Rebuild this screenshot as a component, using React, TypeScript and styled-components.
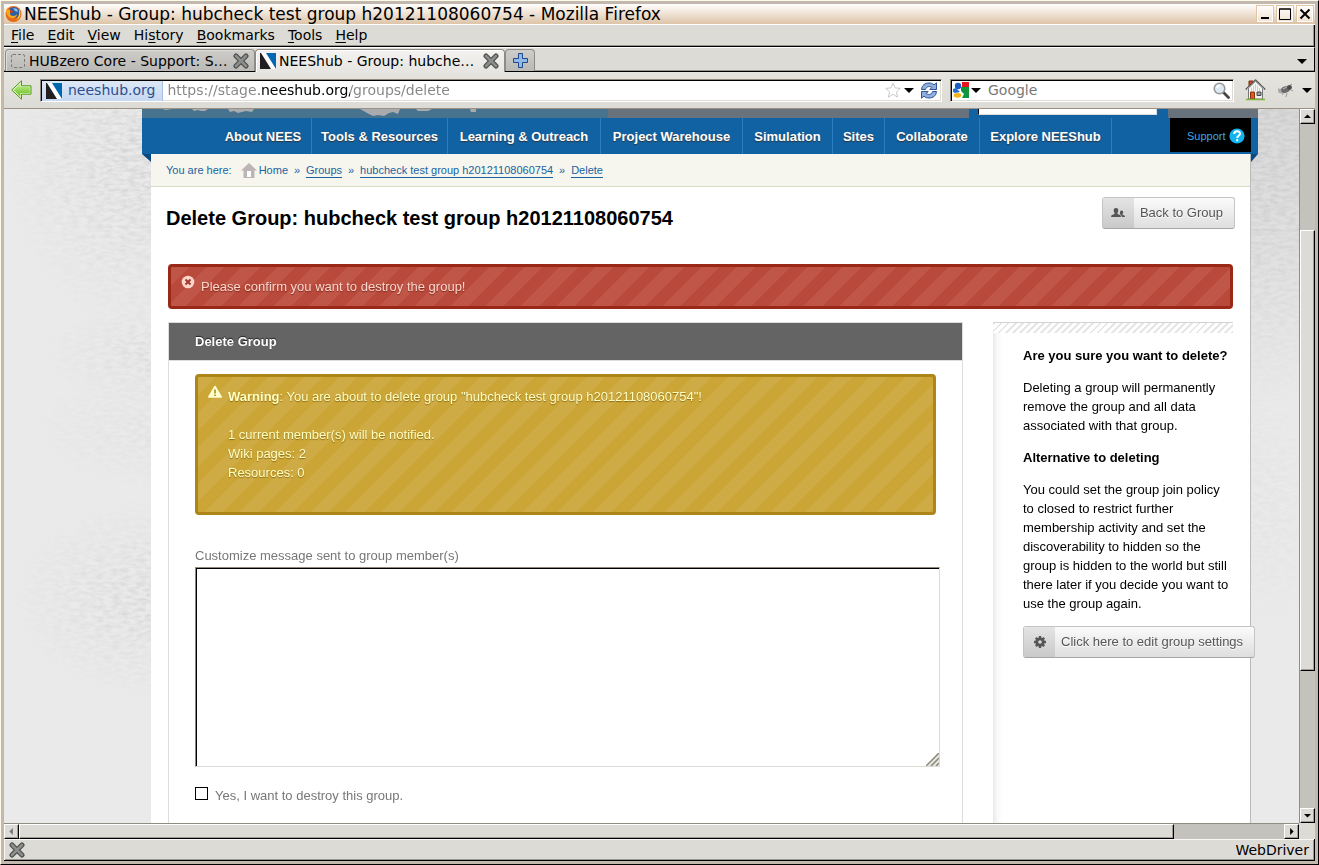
import React from "react";
import styled, { createGlobalStyle, css } from "styled-components";

const GlobalStyle = createGlobalStyle`
  *, *::before, *::after { box-sizing: border-box; }
  html, body, #root { height: 100%; margin: 0; }
  body { overflow: hidden; font: 13px/19px "Liberation Sans", Arial, sans-serif; }
  ul, ol, p, h1, h2, h3 { margin: 0; padding: 0; list-style: none; }
  svg { display: block; flex: none; }
  button { font: inherit; padding: 0; border: 0; background: none; color: inherit; }
  a { color: inherit; text-decoration: none; }
`;

const chromeFont = `"DejaVu Sans", Verdana, sans-serif`;
const face = "#dcdbd6";

/* ---------- window frame ---------- */

const Frame = styled.div`
  height: 100vh;
  display: flex;
  flex-direction: column;
  padding: 3px;
  background: #c3b8ae;
  border: 1px solid;
  border-color: #fffbea #000 #000 #fffbea;
  font-family: ${chromeFont};
  font-size: 14px;
  color: #000;
`;

const TitleBar = styled.header`
  flex: none;
  display: flex;
  align-items: center;
  height: 21px;
  padding: 0 1px;
  background: linear-gradient(#fffefd, #ddc4a8);
  border-bottom: 1px solid #fff;
`;

const WindowTitle = styled.div`
  flex: 1;
  margin-left: 2px;
  font-size: 17px;
  line-height: 20px;
  white-space: nowrap;
`;

const WindowButton = styled.button`
  width: 18px;
  height: 18px;
  margin-left: 2px;
  display: grid;
  place-items: center;
  background: linear-gradient(#fffdfb, #f0e0d0);
  border: 1px solid #dfc4a6;
  box-shadow: inset 0 0 0 1px #fff;
`;

const MenuBar = styled.nav`
  flex: none;
  display: flex;
  gap: 13px;
  height: 22px;
  padding-left: 7px;
  line-height: 21px;
  background: ${face};
  border-right: 1px solid #000;
  border-bottom: 1px solid #000;
  box-shadow: inset -1px -1px #9b968e;
`;

const MenuItem = styled.button`
  u { text-underline-offset: 2px; }
`;

const TabBar = styled.div`
  flex: none;
  display: flex;
  height: 25px;
  padding: 1px 0 0 1px;
  background: ${face};
  border-top: 1px solid #fff;
  border-right: 1px solid #000;
  box-shadow: inset 0 -1px #000, inset 0 -2px #9b968e;
`;

const Tab = styled.div<{ $active?: boolean }>`
  width: 250px;
  height: ${(p) => (p.$active ? 24 : 22)}px;
  display: flex;
  align-items: center;
  padding: ${(p) => (p.$active ? "0 5px 2px 4px" : "0 5px")};
  border: 1px solid #8e8b86;
  border-bottom: 0;
  border-radius: 4px 4px 0 0;
  background: ${(p) => (p.$active ? "linear-gradient(#f4f3f1, #e5e4e0)" : "linear-gradient(#cfcdca, #bbb9b5)")};
  box-shadow: inset 1px 1px ${(p) => (p.$active ? "#fff" : "#dedcd9")};
`;

const TabLabel = styled.span`
  flex: 1;
  margin-left: 3px;
  line-height: 20px;
  white-space: nowrap;
`;

const NewTab = styled.button`
  width: 30px;
  height: 22px;
  display: grid;
  place-items: center;
  border: 1px solid #8e8b86;
  border-bottom: 0;
  border-radius: 4px 4px 0 0;
  background: linear-gradient(#cfcdca, #bbb9b5);
`;

const ListTabs = styled.button`
  margin: 0 7px 0 auto;
`;

const ToolBar = styled.div`
  flex: none;
  display: flex;
  align-items: center;
  height: 37px;
  padding: 0 3px 0 7px;
  background: linear-gradient(#e5e4df, ${face});
  border-bottom: 1px solid #9b9187;
`;

const Field = styled.div<{ $grow?: boolean }>`
  ${(p) => (p.$grow ? css`flex: 1; margin: 0 8px;` : css`flex: 0 0 284px;`)}
  height: 23px;
  display: flex;
  align-items: center;
  padding-right: 3px;
  background: #fff;
  border: 1px solid;
  border-color: #8f887e #fff #fff #8f887e;
  box-shadow: inset 1px 1px #000, inset -1px -1px #dedbd5;
`;

const SiteBadge = styled.button`
  align-self: stretch;
  display: flex;
  align-items: center;
  gap: 6px;
  margin: 1px 0 0 1px;
  padding: 0 7px 0 4px;
  color: #2d4f8e;
  background: linear-gradient(#dde7f6, #c6d8f2);
  border-right: 1px solid #a9bfe4;
`;

const TextField = styled.input`
  flex: 1;
  min-width: 0;
  height: 20px;
  padding: 0 0 0 4px;
  border: 0;
  outline: 0;
  background: none;
  font: 14px/20px ${chromeFont};
  &::placeholder { color: #777; opacity: 1; }
`;

const Address = styled(TextField)`
  color: transparent;
  background: linear-gradient(90deg, #858585 96px, #000 96px 187px, #858585 187px);
  background-clip: text;
  -webkit-background-clip: text;
`;

const ToolButton = styled.button<{ $gap?: number }>`
  margin-left: ${(p) => p.$gap ?? 0}px;
`;

/* ---------- scroll area ---------- */

const Middle = styled.div`
  flex: 1;
  min-height: 0;
  display: flex;
`;

const Viewport = styled.div`
  position: relative;
  flex: 1;
  min-width: 0;
  overflow: hidden;
  padding: 0 41px 0 138px;
  background: #eaeaea;
  font: 13px/19px "Liberation Sans", Arial, sans-serif;
`;

const VScroll = styled.div`
  width: 16px;
  display: flex;
  flex-direction: column;
  background: #c4c2bc;
  border-left: 1px solid #8f8b85;
`;

const HScroll = styled.div`
  flex: none;
  display: flex;
  height: 16px;
  margin-right: 16px;
  background: #c4c2bc;
  border-top: 1px solid #8f8b85;
  box-shadow: 16px 0 ${face};
`;

const Bevel = css`
  background: ${face};
  border: 1px solid;
  border-color: #fff #000 #000 #fff;
  box-shadow: inset -1px -1px #a39c93;
`;

const ScrollButton = styled.button`
  ${Bevel}
  flex: none;
  width: 15px;
  height: 15px;
  display: grid;
  place-items: center;
`;

const Gutter = styled.div<{ $size: number }>`
  flex: ${(p) => p.$size} 0 0;
`;

const Thumb = styled(Gutter)`
  ${Bevel}
`;

const Status = styled.footer`
  flex: none;
  display: flex;
  align-items: center;
  justify-content: space-between;
  height: 22px;
  padding: 0 5px;
  line-height: 18px;
  background: ${face};
  border-right: 1px solid #000;
  border-bottom: 1px solid #000;
  box-shadow: inset 1px 1px #f8f7f5, inset -1px -1px #9b968e;
`;

/* ---------- site ---------- */

const Backdrop = styled.svg`
  position: absolute;
  inset: 0;
  width: 100%;
  height: 100%;
`;

const Site = styled.div`
  position: relative;
  height: 100%;
  display: flex;
  flex-direction: column;
`;

const Banner = styled.div`
  flex: none;
  display: grid;
  grid-template-columns: 466fr 361fr 199fr 90fr;
  height: 9px;
  background: #68727c;
`;

const BannerPhoto = styled.div`
  overflow: hidden;
  background: #47738f;
`;

const BannerSearch = styled.div`
  padding: 0 11px 0 9px;
  background: #1062a3;
`;

const SearchEdge = styled.input`
  display: block;
  width: 100%;
  height: 6px;
  padding: 0;
  background: #fff;
  border: 1px solid #ddd;
  border-width: 0 1px 1px 1px;
  border-left-color: #000;
`;

const NavBar = styled.nav`
  flex: none;
  display: flex;
  justify-content: space-between;
  height: 36px;
  padding: 0 7px 0 73px;
  background: #1062a3;
`;

const NavList = styled.ul`
  flex: 0 1 897px;
  display: grid;
  grid-template-columns: 97fr 136fr 153fr 142fr 90fr 52fr 95fr 132fr;
`;

const NavItem = styled.li`
  text-align: center;
  white-space: nowrap;
  border-right: 1px solid #2a7dc0;
`;

const NavLink = styled.a`
  display: block;
  font-weight: bold;
  line-height: 38px;
  color: #fff;
  text-shadow: 0 1px 1px #333;
`;

const Support = styled.a`
  display: flex;
  align-items: center;
  gap: 3px;
  width: 81px;
  height: 34px;
  padding: 2px 0 0 17px;
  font-size: 11px;
  color: #3aa9e0;
  background: #000;
`;

const Folds = styled.div`
  height: 0;
  display: flex;
  justify-content: space-between;
`;

const Page = styled.main`
  flex: 1;
  min-height: 0;
  margin: 0 7px 0 9px;
  background: #fff;
  border-right: 1px solid #bbb;
`;

const Crumbs = styled.nav`
  display: flex;
  align-items: center;
  height: 33px;
  padding: 0 15px;
  font-size: 11px;
  line-height: 14px;
  color: #1b62a0;
  background: #f6f6ee;
  border-bottom: 1px solid #d9dbc2;
`;

const Crumb = styled.a<{ $plain?: boolean }>`
  border-bottom: 1px solid ${(p) => (p.$plain ? "transparent" : "#1b62a0")};
`;

const Sep = styled.span`
  width: 18px;
  text-align: center;
`;

const HomeMark = styled.span`
  margin: 0 2px 0 9px;
`;

const Heading = styled.header`
  display: flex;
  justify-content: space-between;
  align-items: flex-start;
  padding: 10px 15px 0;
`;

const PageTitle = styled.h1`
  padding-top: 9px;
  font-size: 20px;
  line-height: 24px;
`;

const IconButton = styled.a`
  display: inline-flex;
  align-items: center;
  height: 32px;
  padding-right: 11px;
  line-height: 30px;
  color: #555;
  white-space: nowrap;
  text-shadow: 0 1px #fff;
  background: linear-gradient(#fbfbfb, #dedede);
  border: 1px solid #c4c4c4;
  border-bottom-color: #a5a5a5;
  border-radius: 3px;
`;

const IconCell = styled.span`
  display: grid;
  place-items: center;
  width: 31px;
  height: 30px;
  margin-right: 6px;
  background: linear-gradient(#e4e4e4, #c9c9c9);
`;

const Notice = styled.div<{ $tone: "error" | "warning" }>`
  position: relative;
  padding: 10px 30px;
  border: 3px solid;
  border-radius: 4px;
  ${(p) =>
    p.$tone === "error"
      ? css`
          margin: 34px 17px 13px;
          color: #fcd5cb;
          border-color: #9a2817;
          background: repeating-linear-gradient(135deg, #c05648 0 13px, #b94a3b 13px 25px);
          text-shadow: 0 1px 1px #7c2a20;
        `
      : css`
          margin-bottom: 31px;
          padding-bottom: 30px;
          color: #ffffc2;
          border-color: #ae8517;
          background: repeating-linear-gradient(135deg, #cfab45 0 13px, #cba535 13px 25px);
          text-shadow: 0 1px 1px #8c6c16;
        `}
`;

const NoticeIcon = styled.span`
  position: absolute;
  left: 10px;
  top: 8px;
`;

const Columns = styled.div`
  display: flex;
  gap: 30px;
  height: 600px;
  margin: 0 17px;
`;

const Panel = styled.form`
  flex: 1;
  min-width: 0;
  border: 1px solid #ddd;
`;

const PanelTitle = styled.h2`
  height: 38px;
  padding-left: 26px;
  font-size: 13px;
  line-height: 37px;
  color: #fff;
  text-shadow: 0 -1px 1px #222;
  background: #646464;
  border-bottom: 1px solid #ddd;
`;

const PanelBody = styled.div`
  padding: 13px 26px;
  color: #777;
`;

const FieldLabel = styled.label`
  display: block;
`;

const MessageWrap = styled.div`
  position: relative;
  width: calc(100% + 4px);
  margin: 2px 0 19px;
`;

const Message = styled.textarea`
  display: block;
  width: 100%;
  height: 200px;
  resize: none;
  outline: 0;
  background: #fff;
  border: 1px solid;
  border-color: #8f887e #dcdbd6 #dcdbd6 #8f887e;
  box-shadow: inset 1px 1px #000;
`;

const Grip = styled.svg`
  position: absolute;
  right: 1px;
  bottom: 1px;
`;

const Confirm = styled.label`
  display: flex;
  align-items: flex-start;
  gap: 7px;
`;

const Tick = styled.input`
  appearance: none;
  width: 13px;
  height: 13px;
  margin: 1px 0 0;
  border: 1px solid #000;
  background: #fff;
`;

const Aside = styled.aside`
  flex: none;
  width: 240px;
  padding-left: 30px;
  background: linear-gradient(90deg, #e9e9e9, #f8f8f8 4px, #fff 10px);
`;

const Hatch = styled.div`
  height: 11px;
  margin: 0 0 13px -30px;
  border-top: 1px solid #d3d3d3;
  background: repeating-linear-gradient(135deg, #e6e6e6 0 2px, #fff 2px 5px);
`;

const AsideTitle = styled.h3`
  margin-bottom: 13px;
  font-size: 13px;
  line-height: 19px;
`;

const AsideText = styled.p`
  margin-bottom: 13px;
`;

/* ---------- drawings ---------- */

const Caret = ({ dir = "down", color = "#000", size = 10 }: { dir?: "up" | "down" | "left" | "right"; color?: string; size?: number }) => {
  const turn = { down: 0, left: 90, up: 180, right: 270 }[dir];
  return (
    <svg width={size} height={size} viewBox="0 0 10 10">
      <path d="M0 3h10L5 8z" fill={color} transform={`rotate(${turn} 5 5)`} />
    </svg>
  );
};

const FirefoxIcon = () => (
  <svg width="17" height="18" viewBox="0 0 17 18">
    <circle cx="8.5" cy="9" r="8" fill="#e66a13" />
    <circle cx="9" cy="7.5" r="5.6" fill="#2b5fa8" />
    <path d="M8 3l4 1 1 3-3-1z" fill="#8fc4ee" />
    <path d="M1 4c1 1 2 0 4 1 1 1 2 1 3 2l-3 1c0 2 1 3 3 3s3-1 4-2c0 3-3 5-6 4S1 9 1 4z" fill="#f6a823" />
    <path d="M14 4c3 5 1 10-4 12 3-2 5-6 4-12z" fill="#ffd24a" />
    <path d="M5 5l3 1-1 2-2 0z" fill="#c7420d" />
  </svg>
);

const CloseIcon = () => (
  <svg width="16" height="16" viewBox="0 0 16 16">
    <path d="M3 3l10 10M13 3L3 13" stroke="#4c4f4d" strokeWidth="5" strokeLinecap="round" />
    <path d="M3 3l10 10M13 3L3 13" stroke="#8b8e8b" strokeWidth="2.6" strokeLinecap="round" />
  </svg>
);

const NeesIcon = () => (
  <svg width="16" height="16" viewBox="0 0 16 16">
    <path d="M0 0h16v16H0z" fill="#fff" />
    <path d="M0 0h1l10 16H0z" fill="#231f20" />
    <path d="M6 0h10v16z" fill="#0067b1" />
  </svg>
);

const BlankIcon = () => (
  <svg width="15" height="14" viewBox="0 0 15 14">
    <rect x=".5" y=".5" width="13" height="13" rx="1.5" fill="none" stroke="#777" strokeDasharray="3 2" />
  </svg>
);

const PlusIcon = () => (
  <svg width="15" height="15" viewBox="0 0 15 15">
    <path d="M5.5.5h4v5h5v4h-5v5h-4v-5h-5v-4h5z" fill="#8fb9e8" stroke="#20498c" />
  </svg>
);

const BackIcon = () => (
  <svg width="21" height="20" viewBox="0 0 21 20">
    <defs>
      <linearGradient id="leaf" x2="0" y2="1">
        <stop stopColor="#c9ef94" />
        <stop offset="1" stopColor="#62bd1a" />
      </linearGradient>
    </defs>
    <path d="M.8 10L10.5.8v5h9.500v8.400h-9.500v5z" fill="#e3f7c6" stroke="#4a9a10" strokeLinejoin="round" />
    <path d="M2.800 10l6.500-6.500v3.500h9.500v6h-9.500v3.500z" fill="url(#leaf)" />
  </svg>
);

const StarIcon = () => (
  <svg width="16" height="16" viewBox="0 0 16 16">
    <path d="M8 1l2.100 4.900 5.200.5-3.900 3.500 1.200 5.200L8 12.300l-4.600 2.800 1.200-5.200L.7 6.400l5.200-.5z" fill="#fff" stroke="#c9c9c9" />
  </svg>
);

const ReloadIcon = () => (
  <svg width="18" height="17" viewBox="0 0 18 17">
    <g fill="#8fb0dc" stroke="#2f5596" strokeLinejoin="round">
      <path d="M1.500 7.500C2 3 5 1 9 1c2 0 3.500.5 5 1.800L16.500.8v6.700H9.800l2-2C10 4 6.500 4 5.500 7.500z" />
      <path d="M16.500 9.500C16 14 13 16 9 16c-2 0-3.500-.5-5-1.800l-2.500 2V9.500h6.700l-2 2c1.800 1.500 5.300 1.500 6.300-2z" />
    </g>
  </svg>
);

const GoogleIcon = () => (
  <svg width="16" height="16" viewBox="0 0 16 16">
    <path d="M0 0h16v16H0z" fill="#fff" />
    <path d="M9 0h7v5H9z" fill="#e8141b" />
    <path d="M8 5h8v11H9l2-4-3-3z" fill="#10953c" />
    <circle cx="5" cy="4" r="3.200" fill="#1b5fc4" />
    <path d="M0 7l3-1 4 4-5 1-2-1z" fill="#2a6fd0" />
    <ellipse cx="4.500" cy="13.300" rx="3.800" ry="2.400" fill="#f4b41a" />
  </svg>
);

const MagnifierIcon = () => (
  <svg width="17" height="17" viewBox="0 0 17 17">
    <path d="M10.500 10.500l5 5" stroke="#444" strokeWidth="2.800" strokeLinecap="round" />
    <circle cx="6.500" cy="6.500" r="5.300" fill="#dce8f3" stroke="#979797" strokeWidth="1.500" />
    <path d="M4 6c0-2 1-2.500 3-2.500" stroke="#fff" fill="none" strokeWidth="1.500" />
  </svg>
);

const HouseIcon = () => (
  <svg width="21" height="22" viewBox="0 0 21 22">
    <path d="M4 2h4v6H4z" fill="#cf4b1c" stroke="#7c2a0d" />
    <path d="M3.500 9l7-6.500 7 6.500v11h-14z" fill="#f4f4f0" stroke="#777" />
    <path d="M6.500 9v3M8.500 7v5M10.500 5v7M12.500 7v5M14.500 9v3" stroke="#cfcfcb" />
    <path d="M.8 10.500L10.500 1.200l9.700 9.300" fill="none" stroke="#555" strokeWidth="1.600" strokeLinejoin="round" />
    <path d="M2 10.200l8.500-8 8.500 8" fill="none" stroke="#eee" strokeWidth=".6" />
    <path d="M5.500 13h4v7h-4z" fill="#dd5a20" stroke="#8a2f0c" />
    <path d="M12 13h4v3.500h-4z" fill="#9aa5ab" stroke="#444" />
    <path d="M1 20.500h19" stroke="#7db53c" strokeWidth="1.500" />
  </svg>
);

const BugIcon = () => (
  <svg width="17" height="15" viewBox="0 0 17 15">
    <path d="M1 6l5 1M5 12l3-4M9 14l1-4M13 2l2-1M14 7l2 1M2 9l4-1" stroke="#9a9a98" />
    <ellipse cx="5" cy="8" rx="4" ry="2.500" fill="#a9a9a6" />
    <ellipse cx="8.500" cy="6.500" rx="4.500" ry="3.200" transform="rotate(-20 8.500 6.500)" fill="#6b6b6b" />
    <circle cx="12.500" cy="4.500" r="2.400" fill="#4b4b4b" />
    <path d="M6 6l4-2" stroke="#bbb" />
  </svg>
);

const CrumbHouse = () => (
  <svg width="16" height="16" viewBox="0 0 16 16">
    <path d="M8 1l8 7.500h-2.500V16h-11V8.500H0z" fill="#bdb5b5" />
    <path d="M6 9h4v6H6z" fill="#fff" />
  </svg>
);

const HelpIcon = () => (
  <svg width="16" height="16" viewBox="0 0 16 16">
    <circle cx="8" cy="8" r="7.600" fill="#12b4f0" />
    <path d="M5.200 6c0-3.800 5.800-3.600 5.800-.3C11 7.800 8.200 7.800 8.200 10M8.200 11.300v2" fill="none" stroke="#fff" strokeWidth="2" />
  </svg>
);

const UsersIcon = () => (
  <svg width="14" height="10" viewBox="0 0 14 10" fill="#555">
    <path d="M5 0c2 0 2.500 1.500 2.300 3L6.500 5v1l3 1.300.5 1.700H0l.5-1.700 3-1.300V5l-.8-2C2.500 1.500 3 0 5 0z" />
    <path d="M10.500 2.500c1.500 0 1.800 1 1.700 2.200L11.500 6v.8l2 .8.500 1.400h-3L10 7 8.500 6c.8-.5.6-1 .5-1.500 0-1.200.3-2 1.500-2z" />
  </svg>
);

const GearIcon = () => (
  <svg width="12" height="12" viewBox="0 0 12 12">
    <circle cx="6" cy="6" r="3.300" fill="none" stroke="#555" strokeWidth="2.600" />
    <path d="M6 0v12M0 6h12M1.800 1.800l8.400 8.400M10.200 1.800l-8.400 8.400" stroke="#555" strokeWidth="2.400" />
    <circle cx="6" cy="6" r="1.800" fill="#dadada" />
  </svg>
);

const ErrorIcon = () => (
  <svg width="14" height="14" viewBox="0 0 14 14">
    <circle cx="7" cy="7" r="6.300" fill="#fcd5cb" />
    <path d="M4.500 4.500l5 5M9.500 4.500l-5 5" stroke="#a03a2d" strokeWidth="2" />
  </svg>
);

const WarnIcon = () => (
  <svg width="14" height="14" viewBox="0 0 14 14">
    <path d="M7 1.500L13.200 12H.8z" fill="#ffffd0" stroke="#ffffd0" strokeWidth="1.500" strokeLinejoin="round" />
    <path d="M7 4.500v4M7 9.500V11" stroke="#b8952b" strokeWidth="1.800" />
  </svg>
);

const Texture = () => (
  <Backdrop aria-hidden="true">
    <defs>
      <filter id="grain" x="0" y="0" width="100%" height="100%">
        <feTurbulence type="fractalNoise" baseFrequency="0.12 0.3" numOctaves="5" seed="8" />
        <feColorMatrix values="0 0 0 0 .5  0 0 0 0 .5  0 0 0 0 .5  1.200 0 0 0 -.42" />
        <feComposite operator="in" in2="SourceGraphic" />
      </filter>
      <radialGradient id="fade">
        <stop offset="0" stopColor="#000" />
        <stop offset=".5" stopColor="#000" stopOpacity=".5" />
        <stop offset="1" stopColor="#000" stopOpacity="0" />
      </radialGradient>
      <linearGradient id="shade" x2="0" y2="1">
        <stop stopColor="#d9d9d9" />
        <stop offset="1" stopColor="#d9d9d9" stopOpacity="0" />
      </linearGradient>
    </defs>
    <rect x="1246" width="60" height="300" fill="url(#shade)" />
    <g filter="url(#grain)">
      <ellipse cx="150" cy="40" rx="150" ry="190" fill="url(#fade)" />
      <ellipse cx="150" cy="245" rx="110" ry="50" fill="url(#fade)" opacity=".6" />
      <ellipse cx="150" cy="320" rx="120" ry="60" fill="url(#fade)" opacity=".4" />
      <ellipse cx="150" cy="490" rx="140" ry="100" fill="url(#fade)" opacity=".8" />
      <ellipse cx="1250" cy="40" rx="150" ry="260" fill="url(#fade)" />
      <ellipse cx="1250" cy="390" rx="90" ry="130" fill="url(#fade)" opacity=".3" />
    </g>
  </Backdrop>
);

const Fold = ({ side }: { side: "left" | "right" }) => (
  <svg width={side === "left" ? 9 : 7} height="8" viewBox="0 0 9 8" preserveAspectRatio="none">
    <path d={side === "left" ? "M0 0h9v8z" : "M0 0h9L0 8z"} fill="#0b4a80" />
  </svg>
);

/* ---------- content ---------- */

const menus: [string, string, string][] = [
  ["", "F", "ile"],
  ["", "E", "dit"],
  ["", "V", "iew"],
  ["Hi", "s", "tory"],
  ["", "B", "ookmarks"],
  ["", "T", "ools"],
  ["", "H", "elp"],
];

const sections = [
  "About NEES",
  "Tools & Resources",
  "Learning & Outreach",
  "Project Warehouse",
  "Simulation",
  "Sites",
  "Collaborate",
  "Explore NEEShub",
];

export default function App() {
  return (
    <Frame>
      <GlobalStyle />
      <TitleBar>
        <FirefoxIcon />
        <WindowTitle>NEEShub - Group: hubcheck test group h20121108060754 - Mozilla Firefox</WindowTitle>
        <WindowButton aria-label="Minimize">
          <svg width="12" height="12"><path d="M2 10h8" stroke="#000" strokeWidth="2" /></svg>
        </WindowButton>
        <WindowButton aria-label="Maximize">
          <svg width="12" height="12"><path d="M.5 1h11v10.500H.5zM0 1h12" fill="none" stroke="#000" /></svg>
        </WindowButton>
        <WindowButton aria-label="Close">
          <svg width="12" height="12"><path d="M1.500 1.500l9 9M10.500 1.500l-9 9" stroke="#000" strokeWidth="2" /></svg>
        </WindowButton>
      </TitleBar>

      <MenuBar>
        {menus.map(([before, key, after]) => (
          <MenuItem key={key}>
            {before}
            <u>{key}</u>
            {after}
          </MenuItem>
        ))}
      </MenuBar>

      <TabBar>
        <Tab>
          <BlankIcon />
          <TabLabel>HUBzero Core - Support: S…</TabLabel>
          <button aria-label="Close tab"><CloseIcon /></button>
        </Tab>
        <Tab $active>
          <NeesIcon />
          <TabLabel>NEEShub - Group: hubche…</TabLabel>
          <button aria-label="Close tab"><CloseIcon /></button>
        </Tab>
        <NewTab aria-label="New tab"><PlusIcon /></NewTab>
        <ListTabs aria-label="List all tabs"><Caret /></ListTabs>
      </TabBar>

      <ToolBar>
        <ToolButton aria-label="Back"><BackIcon /></ToolButton>
        <Field $grow>
          <SiteBadge><NeesIcon />neeshub.org</SiteBadge>
          <Address aria-label="Address" defaultValue="https://stage.neeshub.org/groups/delete" />
          <ToolButton aria-label="Bookmark"><StarIcon /></ToolButton>
          <ToolButton $gap={3} aria-label="History"><Caret /></ToolButton>
          <ToolButton $gap={6} aria-label="Reload"><ReloadIcon /></ToolButton>
        </Field>
        <Field>
          <ToolButton $gap={2} aria-label="Search engine"><GoogleIcon /></ToolButton>
          <ToolButton $gap={2} aria-label="Choose engine"><Caret /></ToolButton>
          <ToolButton as="span" $gap={3} />
          <TextField aria-label="Search" placeholder="Google" />
          <ToolButton aria-label="Go"><MagnifierIcon /></ToolButton>
        </Field>
        <ToolButton $gap={11} aria-label="Home"><HouseIcon /></ToolButton>
        <ToolButton $gap={11} aria-label="Debugger"><BugIcon /></ToolButton>
        <ToolButton $gap={8} aria-label="More"><Caret /></ToolButton>
      </ToolBar>

      <Middle>
        <Viewport>
          <Texture />
          <Site>
            <Banner>
              <BannerPhoto>
                <svg width="466" height="9" viewBox="0 0 466 9" fill="#a9abae">
                  <path d="M50 0h16l-3 2h-4l-3-1-4 1zM86 0h26l-2 3-6-1-8 2-4-2-4 1zM218 0h40l-2 5-5-2-4 1-5 3-6-1-5 1-6-3zM274 0h16l-4 2h-10zM328 0h6v3h-5zM20 0h10l-6 1z" />
                </svg>
              </BannerPhoto>
              <span />
              <BannerSearch><SearchEdge aria-label="Search the site" /></BannerSearch>
            </Banner>
            <NavBar>
              <NavList>
                {sections.map((name) => (
                  <NavItem key={name}><NavLink href="#">{name}</NavLink></NavItem>
                ))}
              </NavList>
              <Support href="#">Support<HelpIcon /></Support>
            </NavBar>
            <Folds>
              <Fold side="left" />
              <Fold side="right" />
            </Folds>

            <Page>
              <Crumbs>
                You are here:
                <HomeMark><CrumbHouse /></HomeMark>
                <Crumb $plain href="#">Home</Crumb>
                <Sep>»</Sep>
                <Crumb href="#">Groups</Crumb>
                <Sep>»</Sep>
                <Crumb href="#">hubcheck test group h20121108060754</Crumb>
                <Sep>»</Sep>
                <Crumb href="#">Delete</Crumb>
              </Crumbs>

              <Heading>
                <PageTitle>Delete Group: hubcheck test group h20121108060754</PageTitle>
                <IconButton href="#"><IconCell><UsersIcon /></IconCell>Back to Group</IconButton>
              </Heading>

              <Notice $tone="error">
                <NoticeIcon><ErrorIcon /></NoticeIcon>
                Please confirm you want to destroy the group!
              </Notice>

              <Columns>
                <Panel>
                  <PanelTitle>Delete Group</PanelTitle>
                  <PanelBody>
                    <Notice $tone="warning">
                      <NoticeIcon><WarnIcon /></NoticeIcon>
                      <strong>Warning</strong>: You are about to delete group "hubcheck test group h20121108060754"!
                      <br />
                      <br />
                      1 current member(s) will be notified.
                      <br />
                      Wiki pages: 2
                      <br />
                      Resources: 0
                    </Notice>
                    <FieldLabel htmlFor="message">Customize message sent to group member(s)</FieldLabel>
                    <MessageWrap>
                      <Message id="message" />
                      <Grip width="13" height="13" aria-hidden="true">
                        <path d="M0 13L13 0v13z" fill="#e8e6e0" />
                        <path d="M0 13L13 0M5 13l8-8M10 13l3-3" stroke="#8b877c" strokeWidth="1.500" />
                      </Grip>
                    </MessageWrap>
                    <Confirm>
                      <Tick type="checkbox" />
                      Yes, I want to destroy this group.
                    </Confirm>
                  </PanelBody>
                </Panel>

                <Aside>
                  <Hatch />
                  <AsideTitle>Are you sure you want to delete?</AsideTitle>
                  <AsideText>Deleting a group will permanently remove the group and all data associated with that group.</AsideText>
                  <AsideTitle>Alternative to deleting</AsideTitle>
                  <AsideText>
                    You could set the group join policy to closed to restrict further membership activity and set the
                    discoverability to hidden so the group is hidden to the world but still there later if you decide you
                    want to use the group again.
                  </AsideText>
                  <IconButton href="#"><IconCell><GearIcon /></IconCell>Click here to edit group settings</IconButton>
                </Aside>
              </Columns>
            </Page>
          </Site>
        </Viewport>
        <VScroll>
          <ScrollButton aria-label="Scroll up"><Caret dir="up" size={7} /></ScrollButton>
          <Gutter $size={106} />
          <Thumb $size={441} />
          <Gutter $size={137} />
          <ScrollButton aria-label="Scroll down"><Caret size={7} /></ScrollButton>
        </VScroll>
      </Middle>

      <HScroll>
        <ScrollButton aria-label="Scroll left"><Caret dir="left" size={7} color="#777" /></ScrollButton>
        <Thumb $size={1155} />
        <Gutter $size={110} />
        <ScrollButton aria-label="Scroll right"><Caret dir="right" size={7} /></ScrollButton>
      </HScroll>

      <Status>
        <button aria-label="Close bar"><CloseIcon /></button>
        <span>WebDriver</span>
      </Status>
    </Frame>
  );
}
